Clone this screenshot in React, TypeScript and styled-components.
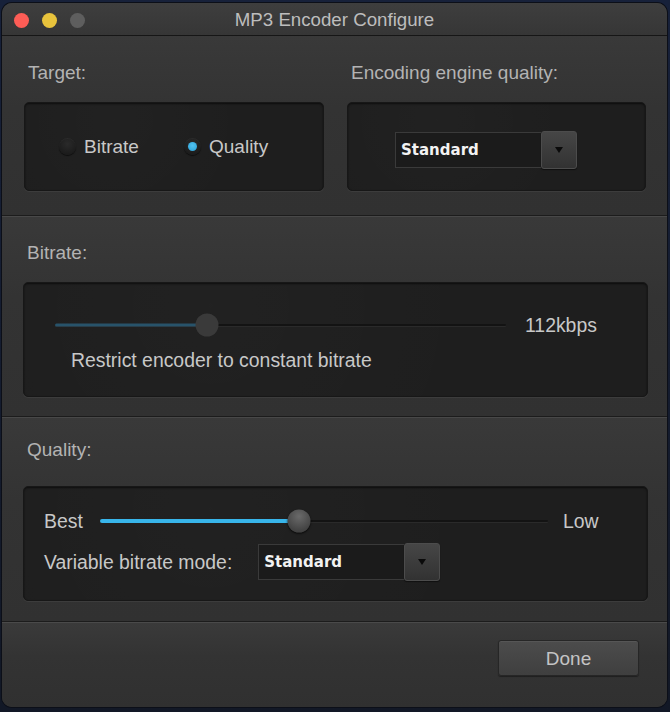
import React from "react";
import styled, { createGlobalStyle } from "styled-components";

const Global = createGlobalStyle`
  html, body { margin: 0; padding: 0; background: #151b2b; }
  body { font-family: "Liberation Sans", Arial, sans-serif; -webkit-font-smoothing: antialiased; }
  #root { width: 670px; height: 712px; }
`;

const Desktop = styled.div`
  width: 670px;
  height: 712px;
  padding: 3px 0 0 2px;
  box-sizing: border-box;
  background: linear-gradient(180deg, #17213a 0%, #121826 100%);
`;

const Window = styled.div`
  width: 665px;
  height: 704px;
  border-radius: 10px;
  overflow: hidden;
  display: flex;
  flex-direction: column;
  background: #333333;
  box-shadow: 0 0 0 1px #0c0f18;
`;

const TitleBar = styled.div`
  height: 32px;
  flex: none;
  position: relative;
  display: flex;
  align-items: center;
  justify-content: center;
  background: linear-gradient(180deg, #3e3e3e, #363636);
  border-bottom: 1px solid #161616;
`;

const Lights = styled.div`
  position: absolute;
  left: 12px;
  top: 10px;
  display: flex;
  gap: 13px;
`;

const Light = styled.span<{ $c: string }>`
  width: 15px;
  height: 15px;
  border-radius: 50%;
  background: ${(p) => p.$c};
`;

const Title = styled.div`
  color: #bdbdbd;
  font-size: 18.7px;
  line-height: 22px;
  margin-top: 2px;
`;

const Section = styled.div<{ $h: number; $pt: number }>`
  height: ${(p) => p.$h}px;
  flex: none;
  box-sizing: border-box;
  padding: ${(p) => p.$pt}px 19px 0 21px;
  background: linear-gradient(180deg, #393939 0%, #333333 40%, #313131 100%);
  border-top: 1px solid #484848;
  border-bottom: 1px solid #1c1c1c;
`;

const FirstSection = styled(Section)`
  border-top: none;
  display: grid;
  grid-template-columns: 300px 299px;
  column-gap: 23px;
  padding-left: 22px;
`;

const Column = styled.div`
  display: flex;
  flex-direction: column;
`;

const Label = styled.div<{ $mb: number }>`
  color: #b3b3b3;
  font-size: 19px;
  line-height: 20px;
  padding-left: 4px;
  margin-bottom: ${(p) => p.$mb}px;
`;

const Panel = styled.div<{ $h: number }>`
  height: ${(p) => p.$h}px;
  box-sizing: border-box;
  border-radius: 5px;
  background:
    radial-gradient(circle at 30% 20%, rgba(255,255,255,0.015), transparent 60%),
    #1e1e1e;
  border: 1px solid #171717;
  box-shadow: inset 0 1px 2px rgba(0,0,0,0.6), 0 1px 0 #3c3c3c;
`;

const RadioPanel = styled(Panel)`
  display: flex;
  align-items: center;
  padding-left: 34px;
  gap: 0;
`;

const RadioItem = styled.label<{ $w: number }>`
  display: flex;
  align-items: center;
  width: ${(p) => p.$w}px;
  color: #c8c8c8;
  font-size: 19px;
  gap: 8px;
`;

const RadioCircle = styled.span<{ $on?: boolean }>`
  width: 17px;
  height: 17px;
  border-radius: 50%;
  box-sizing: border-box;
  display: flex;
  align-items: center;
  justify-content: center;
  background: radial-gradient(circle at 50% 35%, #2a2a2a, #161616);
  box-shadow: 0 1px 1px rgba(0,0,0,0.6), inset 0 1px 0 rgba(255,255,255,0.04);
  &::after {
    content: "";
    display: ${(p) => (p.$on ? "block" : "none")};
    width: 9px;
    height: 9px;
    border-radius: 50%;
    background: radial-gradient(circle at 50% 40%, #52c3f0, #2a9fd4);
  }
`;

const SelectPanel = styled(Panel)`
  display: flex;
  align-items: center;
  padding: 6px 0 0 47px;
`;

const Select = styled.div`
  display: flex;
  align-items: stretch;
  height: 38px;
`;

const SelectField = styled.div`
  width: 146px;
  box-sizing: border-box;
  display: flex;
  align-items: center;
  padding-left: 5px;
  background: #1b1b1b;
  border: 1px solid #3a3a3a;
  border-right: none;
  margin: 1px 0;
  color: #f2f2f2;
  font-family: "DejaVu Sans", Verdana, sans-serif;
  font-weight: bold;
  font-size: 15px;
`;

const SelectButton = styled.div`
  width: 36px;
  box-sizing: border-box;
  border-radius: 3px;
  border: 1px solid #4c4c4c;
  background: linear-gradient(180deg, #464646, #323232);
  box-shadow: 0 1px 1px rgba(0,0,0,0.5);
  display: flex;
  align-items: center;
  justify-content: center;
  &::after {
    content: "";
    border-left: 4.5px solid transparent;
    border-right: 4.5px solid transparent;
    border-top: 6px solid #0a0a0a;
  }
`;

const SliderPanel = styled(Panel)`
  display: flex;
  flex-direction: column;
`;

const SliderRow = styled.div<{ $mt: number; $pl: number }>`
  display: flex;
  align-items: center;
  height: 24px;
  margin-top: ${(p) => p.$mt}px;
  padding-left: ${(p) => p.$pl}px;
`;

const Track = styled.div<{ $w: number }>`
  position: relative;
  width: ${(p) => p.$w}px;
  height: 2px;
  background: #131313;
  box-shadow: 0 1px 0 #2a2a2a;
  border-radius: 1px;
`;

const Fill = styled.div<{ $color: string; $h: number }>`
  position: absolute;
  left: 0;
  top: 50%;
  height: ${(p) => p.$h}px;
  transform: translateY(-50%);
  border-radius: 2px;
  background: ${(p) => p.$color};
`;

const Thumb = styled.div<{ $active?: boolean }>`
  position: absolute;
  top: 50%;
  width: 23px;
  height: 23px;
  border-radius: 50%;
  transform: translate(-50%, -50%);
  background: ${(p) =>
    p.$active
      ? "radial-gradient(circle at 50% 30%, #6a6a6a, #444 70%, #3a3a3a)"
      : "#3a3a3a"};
  box-shadow: ${(p) => (p.$active ? "0 1px 2px rgba(0,0,0,0.8)" : "none")};
`;

const SideText = styled.span<{ $w?: number; $ml?: number }>`
  color: #c8c8c8;
  font-size: 19.4px;
  ${(p) => (p.$w ? `width: ${p.$w}px;` : "")}
  ${(p) => (p.$ml ? `margin-left: ${p.$ml}px;` : "")}
`;

const BodyText = styled.div<{ $mt: number; $pl: number }>`
  color: #c8c8c8;
  font-size: 19.4px;
  line-height: 22px;
  margin-top: ${(p) => p.$mt}px;
  padding-left: ${(p) => p.$pl}px;
`;

const ModeRow = styled.div`
  display: flex;
  align-items: center;
  margin-top: 10px;
  padding-left: 20px;
  gap: 26px;
`;

const Footer = styled.div`
  flex: 1;
  display: flex;
  justify-content: flex-end;
  align-items: flex-start;
  padding: 17px 28px 0 0;
  background: linear-gradient(180deg, #3a3a3a 0%, #333 40%, #303030 100%);
  border-top: 1px solid #4a4a4a;
`;

const Button = styled.button`
  width: 141px;
  height: 36px;
  border-radius: 3px;
  border: 1px solid #262626;
  background: linear-gradient(180deg, #4c4c4c, #3f3f3f);
  box-shadow: inset 0 1px 0 rgba(255,255,255,0.06), 0 1px 1px rgba(0,0,0,0.4);
  color: #c4c4c4;
  font-family: "Liberation Sans", Arial, sans-serif;
  font-size: 19px;
  padding: 1px 0 0;
`;

const DropDown = () => (
  <Select>
    <SelectField>Standard</SelectField>
    <SelectButton />
  </Select>
);

export default function App() {
  return (
    <>
      <Global />
      <Desktop>
        <Window>
          <TitleBar>
            <Lights>
              <Light $c="#fd5d56" />
              <Light $c="#e8c33c" />
              <Light $c="#5e5e5e" />
            </Lights>
            <Title>MP3 Encoder Configure</Title>
          </TitleBar>

          <FirstSection $h={180} $pt={27}>
            <Column>
              <Label $mb={19}>Target:</Label>
              <RadioPanel $h={89}>
                <RadioItem $w={125}>
                  <RadioCircle />
                  Bitrate
                </RadioItem>
                <RadioItem $w={120}>
                  <RadioCircle $on />
                  Quality
                </RadioItem>
              </RadioPanel>
            </Column>
            <Column>
              <Label $mb={19}>Encoding engine quality:</Label>
              <SelectPanel $h={89}>
                <DropDown />
              </SelectPanel>
            </Column>
          </FirstSection>

          <Section $h={201} $pt={26}>
            <Label $mb={19}>Bitrate:</Label>
            <SliderPanel $h={115}>
              <SliderRow $mt={30} $pl={31}>
                <Track $w={451}>
                  <Fill $color="#28536a" $h={3} style={{ width: "146px" }} />
                  <Thumb style={{ left: "152px" }} />
                </Track>
                <SideText $ml={19}>112kbps</SideText>
              </SliderRow>
              <BodyText $mt={12} $pl={47}>Restrict encoder to constant bitrate</BodyText>
            </SliderPanel>
          </Section>

          <Section $h={205} $pt={22}>
            <Label $mb={26}>Quality:</Label>
            <SliderPanel $h={115}>
              <SliderRow $mt={22} $pl={20}>
                <SideText $w={56}>Best</SideText>
                <Track $w={448}>
                  <Fill $color="#38b5ea" $h={4} style={{ width: "196px" }} />
                  <Thumb $active style={{ left: "199px" }} />
                </Track>
                <SideText $ml={15}>Low</SideText>
              </SliderRow>
              <ModeRow>
                <SideText>Variable bitrate mode:</SideText>
                <DropDown />
              </ModeRow>
            </SliderPanel>
          </Section>

          <Footer>
            <Button>Done</Button>
          </Footer>
        </Window>
      </Desktop>
    </>
  );
}
